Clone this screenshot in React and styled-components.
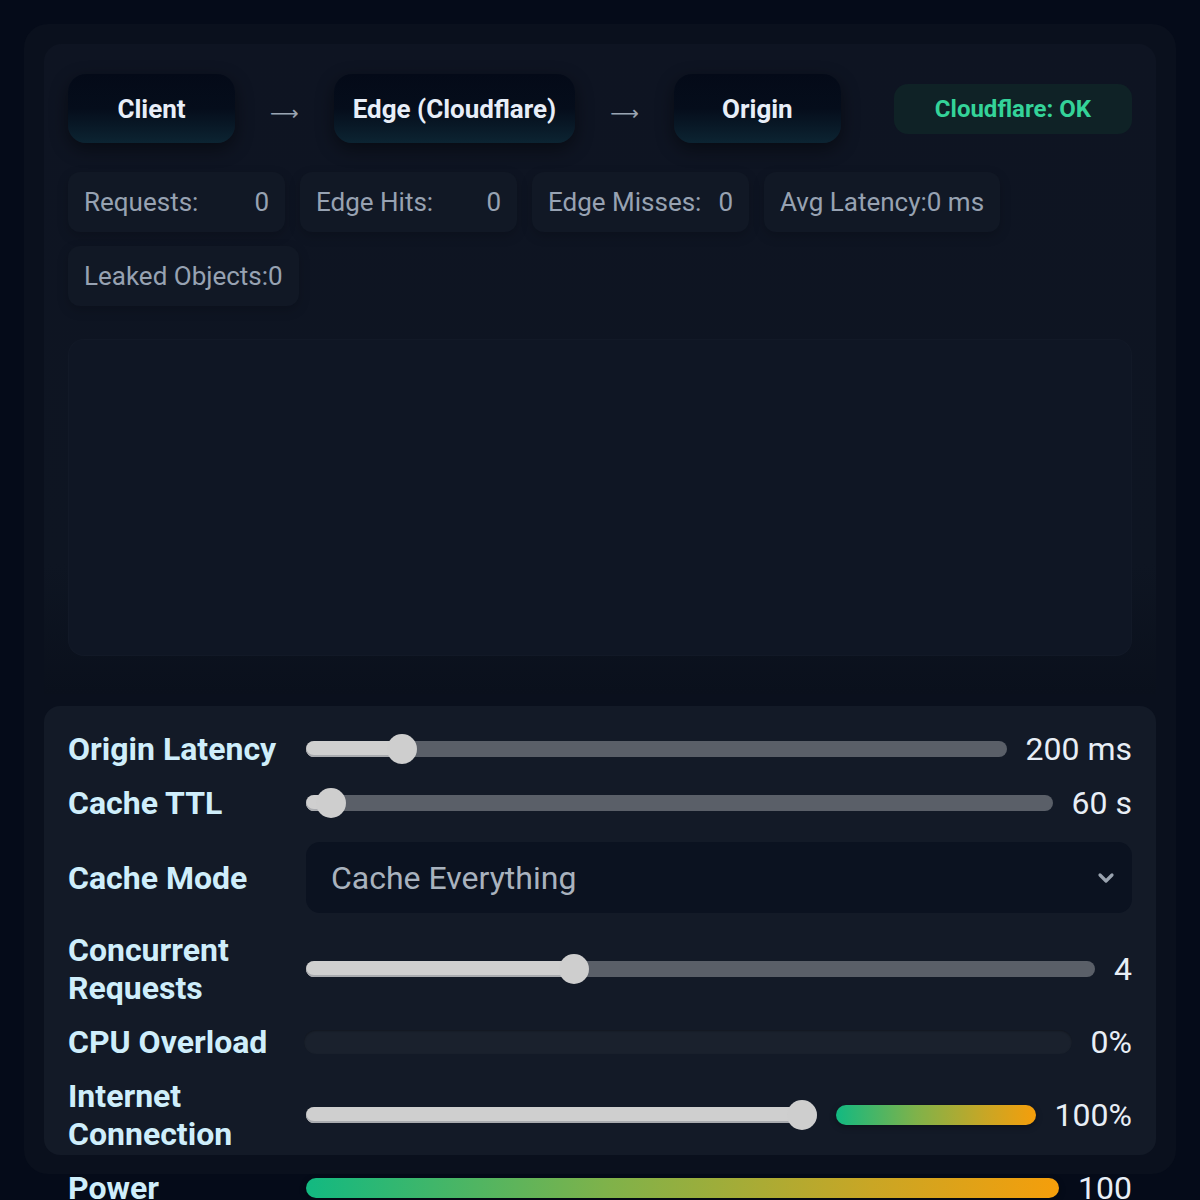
import React from 'react'
import styled, { createGlobalStyle } from 'styled-components'
import { ChevronDown } from 'lucide-react'

const GlobalStyle = createGlobalStyle`
  html, body {
    margin: 0;
    padding: 0;
    background: #050b19;
    font-family: Roboto, "Noto Sans", "Liberation Sans", sans-serif;
    color: #e6edf6;
  }
  * { box-sizing: border-box; }
`

const Page = styled.div`
  padding: 24px 24px 0;
  height: 1200px;
  overflow: hidden;
`

const Shell = styled.div`
  height: 1150px;
  padding: 20px;
  border-radius: 24px;
  background: #0a101d;
`

const Stage = styled.section`
  height: 650px;
  padding: 30px 24px 0;
  border-radius: 18px 18px 0 0;
  background: linear-gradient(180deg, #0e1422 0%, #0e1522 80%, #0a101c 100%);
`

const Flow = styled.div`
  display: flex;
  align-items: center;
  gap: 35px;
`

const Node = styled.div`
  min-width: 167px;
  height: 69px;
  padding: 0 19px;
  display: flex;
  align-items: center;
  justify-content: center;
  border-radius: 18px;
  background: linear-gradient(180deg, #040a18 0%, #050d1b 50%, #0c2432 100%);
  box-shadow: 0 6px 18px rgba(0, 0, 0, 0.45);
  font-size: 26px;
  font-weight: 700;
  color: #e8eef8;
`

const Arrow = styled.span`
  font-size: 20px;
  color: #9aa4b2;
  padding-top: 8px;
  font-family: "DejaVu Sans", sans-serif;
`

const Status = styled.div`
  margin-left: auto;
  height: 50px;
  padding: 0 41px;
  display: flex;
  align-items: center;
  border-radius: 14px;
  background: #0f2226;
  color: #34d399;
  font-size: 24px;
  font-weight: 700;
`

const Stats = styled.div`
  margin-top: 29px;
  display: flex;
  flex-wrap: wrap;
  gap: 14px 15px;
`

const Stat = styled.div`
  min-width: 217px;
  height: 60px;
  padding: 0 16px;
  display: flex;
  align-items: center;
  justify-content: space-between;
  border-radius: 12px;
  background: #111825;
  box-shadow: 0 4px 12px rgba(0, 0, 0, 0.18);
  font-size: 26px;
  color: #97a2b2;
`

const Canvas = styled.div`
  margin-top: 33px;
  height: 317px;
  border-radius: 16px;
  background: #0f1624;
  border: 1px solid rgba(255, 255, 255, 0.015);
`

const Controls = styled.section`
  margin-top: 12px;
  height: 449px;
  padding: 24px 24px 0;
  border-radius: 16px;
  background: #131a27;
  display: grid;
  grid-template-columns: 214px 1fr;
  column-gap: 24px;
  row-gap: 16px;
  align-content: start;
  align-items: center;
`

const Label = styled.div`
  font-size: 32px;
  line-height: 38px;
  font-weight: 700;
  color: #cfeefb;
  margin: ${p => (p.$spaced ? '4px 0 2px' : '0')};
`

const Cell = styled.div`
  display: flex;
  align-items: center;
  gap: 19px;
  margin: ${p => (p.$spaced ? '4px 0 2px' : '0')};
`

const Value = styled.span`
  font-size: 32px;
  line-height: 38px;
  color: #e8eef6;
  white-space: nowrap;
`

const Track = styled.div`
  position: relative;
  flex: 1;
  height: 16px;
  border-radius: 8px;
  background: #5a5f68;
`

const Fill = styled.div`
  position: absolute;
  left: 0;
  top: 0;
  bottom: 0;
  border-radius: 8px;
  background: #cfcfcf;
  box-shadow: inset 0 -2px 0 #a9abaf;
`

const Thumb = styled.div`
  position: absolute;
  top: 50%;
  width: 30px;
  height: 30px;
  margin: -15px 0 0 -15px;
  border-radius: 50%;
  background: #cecece;
`

const Meter = styled.div`
  flex: 1;
  height: 24px;
  margin-left: -2px;
  border-radius: 12px;
  background: #1a212d;
  box-shadow: inset 0 1px 2px rgba(0, 0, 0, 0.3);
`

const Gauge = styled.div`
  flex: ${p => (p.$grow ? 1 : 'none')};
  width: ${p => (p.$grow ? 'auto' : `${p.$w}px`)};
  height: 20px;
  border-radius: 10px;
  background: linear-gradient(90deg, #12b981 0%, #7fb24a 40%, #c9a625 75%, #f59e0b 100%);
  box-shadow: 0 2px 6px rgba(0, 0, 0, 0.35);
`

const Select = styled.div`
  flex: 1;
  height: 71px;
  padding: 0 14px 0 25px;
  display: flex;
  align-items: center;
  justify-content: space-between;
  border-radius: 14px;
  background: #0b1220;
  font-size: 32px;
  color: #a9b2be;
`

function Slider({ frac }) {
  const pos = `calc(15px + (100% - 30px) * ${frac})`
  return (
    <Track>
      <Fill style={{ width: pos }} />
      <Thumb style={{ left: pos }} />
    </Track>
  )
}

const stats = [
  ['Requests:', '0'],
  ['Edge Hits:', '0'],
  ['Edge Misses:', '0'],
  ['Avg Latency:', '0 ms'],
  ['Leaked Objects:', '0'],
]

export default function App() {
  return (
    <Page>
      <GlobalStyle />
      <Shell>
        <Stage>
          <Flow>
            <Node>Client</Node>
            <Arrow>⟶</Arrow>
            <Node>Edge (Cloudflare)</Node>
            <Arrow>⟶</Arrow>
            <Node>Origin</Node>
            <Status>Cloudflare: OK</Status>
          </Flow>
          <Stats>
            {stats.map(([label, value]) => (
              <Stat key={label}>
                <span>{label}</span>
                <span>{value}</span>
              </Stat>
            ))}
          </Stats>
          <Canvas />
        </Stage>

        <Controls>
          <Label>Origin Latency</Label>
          <Cell>
            <Slider frac={0.121} />
            <Value>200 ms</Value>
          </Cell>

          <Label>Cache TTL</Label>
          <Cell>
            <Slider frac={0.014} />
            <Value>60 s</Value>
          </Cell>

          <Label $spaced>Cache Mode</Label>
          <Cell $spaced>
            <Select>
              <span>Cache Everything</span>
              <ChevronDown size={24} strokeWidth={3.2} color="#9aa3af" />
            </Select>
          </Cell>

          <Label>Concurrent Requests</Label>
          <Cell>
            <Slider frac={0.3333} />
            <Value>4</Value>
          </Cell>

          <Label>CPU Overload</Label>
          <Cell>
            <Meter />
            <Value>0%</Value>
          </Cell>

          <Label>Internet Connection</Label>
          <Cell>
            <Slider frac={1} />
            <Gauge $w={200} />
            <Value>100%</Value>
          </Cell>

          <Label>Power</Label>
          <Cell>
            <Gauge $grow />
            <Value>100</Value>
          </Cell>
        </Controls>
      </Shell>
    </Page>
  )
}
